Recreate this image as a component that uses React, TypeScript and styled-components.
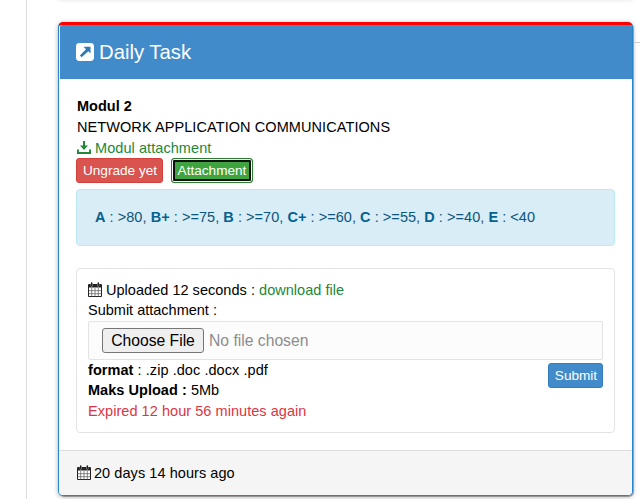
import React from "react";
import styled, { createGlobalStyle, css } from "styled-components";

const GlobalStyle = createGlobalStyle`
  *, *::before, *::after { box-sizing: border-box; }
  html, body { margin: 0; background: #fff; overflow: hidden; }
  body { font: 14.5px/21px "Liberation Sans", Arial, sans-serif; color: #000; }
`;

const Page = styled.div`
  display: grid;
  grid-template-columns: 27px 31px 575px 7px;
  width: 640px;
  height: 499px;
  overflow: hidden;
`;

const Gutter = styled.div`
  border-right: 1px solid #dcdcdc;
`;

const Column = styled.main`
  grid-column: 3;
  min-width: 0;
`;

const PreviousCard = styled.div`
  height: 12px;
  margin-top: -13px;
  box-shadow: 0 1px 4px rgba(0, 0, 0, 0.12);
`;

const Connector = styled.div`
  margin: 42px 0 0 1px;
  height: 1px;
  border-top: 1px dashed #ccc;
`;

const Card = styled.section`
  display: flex;
  flex-direction: column;
  height: 474px;
  margin-top: 23px;
  border: 1px solid #2686ca;
  border-top: 3px solid #f00;
  border-radius: 5px;
  background: #fff;
  box-shadow: 0 1px 5px rgba(0, 0, 0, 0.32), 1px 1px 0 rgba(0, 0, 0, 0.28);
`;

const CardHeader = styled.header`
  display: flex;
  align-items: center;
  gap: 5px;
  height: 54px;
  margin-left: 1px;
  padding-left: 16px;
  background: #428bca;
  border-radius: 2px 2px 0 0;
  color: #fff;
`;

const Title = styled.h1`
  margin: 0;
  font-size: 20.3px;
  font-weight: 400;
  line-height: 24px;
`;

const CardBody = styled.div`
  flex: 1;
  padding: 17px 17px 0 17px;
`;

const CardFooter = styled.footer`
  display: flex;
  align-items: center;
  gap: 3px;
  height: 45px;
  padding-left: 18px;
  background: #f5f5f5;
  border-top: 1px solid #ddd;
  border-radius: 0 0 4px 4px;
`;

const tones = { normal: "#000", success: "#218838", danger: "#dc3545" };

const Line = styled.div<{ $height?: number; $tone?: keyof typeof tones; $spacing?: number }>`
  display: flex;
  align-items: center;
  gap: 4px;
  height: ${(p) => p.$height ?? 21}px;
  letter-spacing: ${(p) => p.$spacing ?? 0}px;
  white-space: pre;
  color: ${(p) => tones[p.$tone ?? "normal"]};
`;

const Intro = styled.div`
  padding-left: 1px;
  margin-bottom: -1px;
`;

const Link = styled.a`
  color: #218838;
`;

const Buttons = styled.div`
  display: flex;
  gap: 8px;
  height: 25px;
`;

const Button = styled.button<{ $kind: "danger" | "success" | "primary"; $width: number }>`
  width: ${(p) => p.$width}px;
  height: 25px;
  padding: 0 0 0 1px;
  border: 1px solid;
  border-radius: 3px;
  font: 13.6px/21px "Liberation Sans", Arial, sans-serif;
  color: #fff;
  white-space: nowrap;
  ${(p) => p.$kind === "danger" && css`background: #d9534f; border-color: #d43f3a;`}
  ${(p) => p.$kind === "primary" && css`background: #428bca; border-color: #357ebd;`}
  ${(p) => p.$kind === "success" && css`
    background: #3fa43f;
    border-color: #27802a;
    box-shadow: inset 0 0 0 1px #fff, inset 0 0 0 3px #101010;
    padding: 0;
  `}
`;

const Grades = styled.div`
  display: flex;
  align-items: center;
  height: 57px;
  margin-top: 6px;
  padding-left: 18px;
  border: 1px solid #bce8f1;
  border-radius: 4px;
  background: #d9edf7;
  color: #0c567d;
  letter-spacing: 0.045px;
  white-space: pre;
`;

const Grade = styled.b`
  color: #04628f;
`;

const Upload = styled.div`
  height: 165px;
  margin-top: 22px;
  padding: 11px 11px 0;
  border: 1px solid #e3e3e3;
  border-radius: 4px;
`;

const FileField = styled.div`
  display: flex;
  align-items: center;
  gap: 5px;
  height: 39px;
  margin-top: 1px;
  padding-left: 13px;
  border: 1px solid #e3e3e3;
  border-radius: 2px;
  background: #fcfcfc;
  font-size: 15.7px;
  color: #8c8c8c;
`;

const ChooseButton = styled.button`
  width: 102px;
  height: 25px;
  padding: 0;
  border: 1px solid #767676;
  border-radius: 3px;
  background: #efefef;
  font: 15.7px/20px "Liberation Sans", Arial, sans-serif;
  color: #000;
`;

const UploadBottom = styled.div`
  display: flex;
  justify-content: space-between;
`;

const SubmitSlot = styled.div`
  padding-top: 3px;
`;

const CalendarIcon = () => (
  <svg width="14" height="16" viewBox="0 0 14 16" fill="none">
    <path d="M.5 3.500h13v11h-13z" fill="#fff" stroke="#222" />
    <path d="M0 5.500V3q0-1 1-1h12q1 0 1 1v2.500z" fill="#222" />
    <path d="M3.700 6v8.500M7 6v8.500M10.300 6v8.500M1 8.700h12M1 11.700h12" stroke="#666" strokeWidth=".8" />
    <path d="M3.700 1.500v2M10.300 1.500v2" stroke="#ddd" strokeWidth="2" strokeLinecap="round" />
    <path d="M3.700 1v2.500M10.300 1v2.500" stroke="#222" strokeWidth="1.500" strokeLinecap="round" />
  </svg>
);

const DownloadIcon = () => (
  <svg width="14" height="16" viewBox="0 0 14 16">
    <path d="M6 0h2v4.500h3L7 9 3 4.500h3z" fill="#218838" />
    <path d="M.9 8.500v3.500h12.200V8.500" fill="none" stroke="#218838" strokeWidth="2" />
  </svg>
);

const ExternalIcon = () => (
  <svg width="18" height="18" viewBox="0 0 18 18">
    <rect width="18" height="18" rx="3.4" fill="#fff" />
    <path d="M7.500 3.700H14.500V10.500L12.300 8.300L5.600 14.300L3.900 12.600L10 6.200z" fill="#2f79b6" />
  </svg>
);

const grades = [
  ["A", ">80, "],
  ["B+", ">=75, "],
  ["B", ">=70, "],
  ["C+", ">=60, "],
  ["C", ">=55, "],
  ["D", ">=40, "],
  ["E", "<40"],
];

export default function App() {
  return (
    <>
      <GlobalStyle />
      <Page>
        <Gutter />
        <Column>
          <PreviousCard />
          <Card>
            <CardHeader>
              <ExternalIcon />
              <Title>Daily Task</Title>
            </CardHeader>
            <CardBody>
              <Intro>
                <Line><b>Modul 2</b></Line>
                <Line $spacing={0.08}>NETWORK APPLICATION COMMUNICATIONS</Line>
                <Line $tone="success" $spacing={0.07}><DownloadIcon /><span>Modul attachment</span></Line>
              </Intro>
              <Buttons>
                <Button $kind="danger" $width={87}>Ungrade yet</Button>
                <Button $kind="success" $width={82}>Attachment</Button>
              </Buttons>
              <Grades>
                <span>
                  {grades.map(([name, range]) => (
                    <React.Fragment key={name}><Grade>{name}</Grade>{" : " + range}</React.Fragment>
                  ))}
                </span>
              </Grades>
              <Upload>
                <Line $height={20} $spacing={0.03}>
                  <CalendarIcon />
                  <span>Uploaded 12 seconds : <Link>download file</Link></span>
                </Line>
                <Line $height={20}>Submit attachment :</Line>
                <FileField>
                  <ChooseButton>Choose File</ChooseButton>
                  <span>No file chosen</span>
                </FileField>
                <UploadBottom>
                  <div>
                    <Line $height={20} $spacing={0.06}><span><b>format</b> : .zip .doc .docx .pdf</span></Line>
                    <Line $height={20} $spacing={0.04}><span><b>Maks Upload :</b> 5Mb</span></Line>
                    <Line $height={22} $tone="danger" $spacing={0.05}>Expired 12 hour 56 minutes again</Line>
                  </div>
                  <SubmitSlot>
                    <Button $kind="primary" $width={55}>Submit</Button>
                  </SubmitSlot>
                </UploadBottom>
              </Upload>
            </CardBody>
            <CardFooter>
              <CalendarIcon />
              <Line $spacing={0.06}>20 days 14 hours ago</Line>
            </CardFooter>
          </Card>
        </Column>
        <Connector />
      </Page>
    </>
  );
}
